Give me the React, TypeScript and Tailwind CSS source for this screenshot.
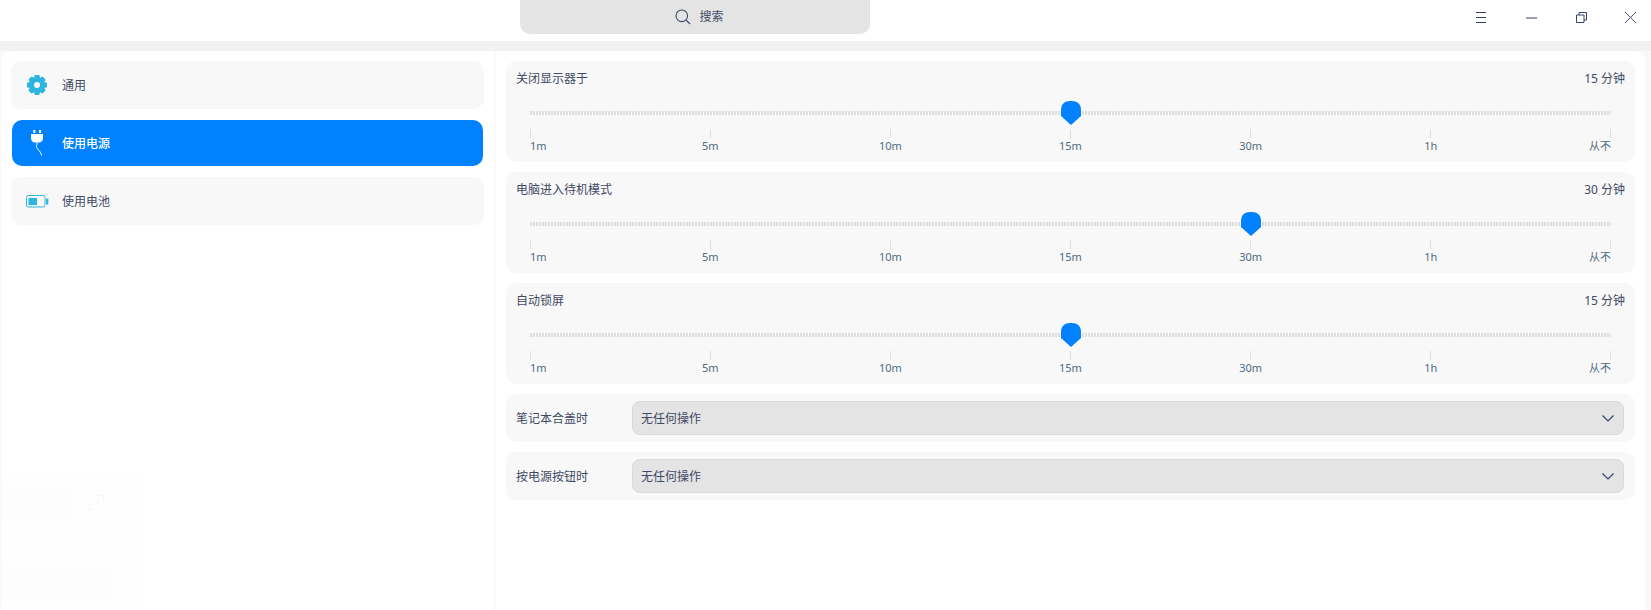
const font = "font-['Noto_Sans','Noto_Sans_CJK_SC',sans-serif]";
const marks = ["1m", "5m", "10m", "15m", "30m", "1h", "从不"];

type SliderRow = { title: string; value: string; step: number };

const sliders: SliderRow[] = [
  { title: "关闭显示器于", value: "15 分钟", step: 3 },
  { title: "电脑进入待机模式", value: "30 分钟", step: 4 },
  { title: "自动锁屏", value: "15 分钟", step: 3 },
];

function GearIcon() {
  return (
    <svg width="20" height="20" viewBox="0 0 20 20">
      {[0, 45, 90, 135, 180, 225, 270, 315].map((a) => (
        <rect key={a} x="7.2" y="0" width="5.6" height="5" rx="1.4" fill="#2cb5de" transform={`rotate(${a} 10 10)`} />
      ))}
      <circle cx="10" cy="10" r="7.6" fill="#2cb5de" />
      <circle cx="10" cy="10" r="3" fill="#f8f8f8" />
    </svg>
  );
}

function PlugIcon() {
  return (
    <svg width="12" height="26" viewBox="0 0 12 26" fill="#fff">
      <rect x="2.3" y="0" width="2" height="3" />
      <rect x="8" y="0" width="2" height="3" />
      <path d="M0 4h12v4.500C12 10.800 10.300 12.500 8 12.500H4C1.700 12.500 0 10.800 0 8.500z" />
      <path fill="none" stroke="#fff" strokeWidth="1" d="M6 12.500c0 2.500-.8 3.500-.3 5 .5 2 4.300 3.500 4.800 8" />
    </svg>
  );
}

function BatteryIcon() {
  return (
    <svg width="23" height="13" viewBox="0 0 23 13" className="shrink-0" fill="#2cb5de">
      <rect x=".5" y=".5" width="18.500" height="11.500" rx="2" fill="none" stroke="#2cb5de" />
      <rect x="2.500" y="3" width="8.500" height="7" />
      <rect x="20" y="3.500" width="2.300" height="6" />
    </svg>
  );
}

function Slider({ title, value, step }: SliderRow) {
  return (
    <div className="h-[101px] rounded-[10px] bg-[#f8f8f8] px-[10px] pt-[9px]">
      <div className="flex justify-between text-[12px] leading-[18px] text-[#3f4a64]">
        <span>{title}</span>
        <span>{value}</span>
      </div>
      <div className="relative mx-[14px] mt-[23px]">
        <div className="h-[4px] bg-[repeating-linear-gradient(90deg,#dedede_0_2px,transparent_2px_3px)]" />
        <svg
          width="20"
          height="24"
          viewBox="0 0 20 24"
          className="absolute top-[-10px]"
          style={{ left: `calc(${(step / 6) * 100}% - 10px)` }}
        >
          <path fill="#0081ff" d="M0 9C0 3 4 0 9 0h2c5 0 9 3 9 9v6l-10 9L0 15z" />
        </svg>
        <div className="mt-[14px] flex justify-between text-[11px] leading-[16px] text-[#526a7f]">
          {marks.map((m, i) => (
            <div
              key={m}
              className={`flex w-0 flex-col whitespace-nowrap ${
                i === 0 ? "items-start" : i === 6 ? "items-end" : "items-center"
              }`}
            >
              <div className="h-[9px] w-px shrink-0 bg-[#dcdcdc]" />
              <span>{m}</span>
            </div>
          ))}
        </div>
      </div>
    </div>
  );
}

function SelectRow({ label }: { label: string }) {
  return (
    <div className="flex h-[48px] items-center rounded-[10px] bg-[#f8f8f8] pl-[10px] pr-[11px] text-[12px] text-[#3f4a64]">
      <span className="w-[116px] pt-[1px]">{label}</span>
      <div className="flex h-[34px] flex-1 items-center justify-between rounded-[8px] border border-[#dadada] bg-[#e4e4e4] pl-[8px] pr-[9px]">
        <span className="pt-[1px]">无任何操作</span>
        <svg width="12" height="7" viewBox="0 0 12 7" fill="none" stroke="#34426a" strokeWidth="1.200">
          <path d="m.5.500 5.500 5.500 5.500-5.500" />
        </svg>
      </div>
    </div>
  );
}

function NavItem({
  label,
  icon,
  active,
}: {
  label: string;
  icon: React.ReactNode;
  active?: boolean;
}) {
  return (
    <div
      className={
        active
          ? "mx-px flex h-[46px] items-center rounded-[10px] bg-[#0081ff] pl-[14px] font-medium text-white"
          : "flex h-[48px] items-center rounded-[10px] bg-[#f8f8f8] pl-[15px] text-[#3f4a64]"
      }
    >
      <div className="flex w-[22px] justify-center">{icon}</div>
      <span className="ml-[14px] pt-[2px] text-[12px]">{label}</span>
    </div>
  );
}

export default function App() {
  return (
    <div className={`${font} flex h-[610px] w-[1651px] flex-col overflow-hidden bg-white`}>
      <header className="relative flex h-[41px] shrink-0 items-start bg-white pl-[520px]">
        <div className="flex h-[34px] w-[350px] items-center justify-center gap-[8px] rounded-b-[10px] bg-[#e4e4e4] pl-[9px] text-[12px] text-[#3f4a64]">
          <svg width="16" height="16" viewBox="0 0 16 16" fill="none" stroke="#414d68" strokeWidth="1.100">
            <circle cx="6.800" cy="6.800" r="5.800" />
            <path d="m11 11 4 4" />
          </svg>
          <span>搜索</span>
        </div>
        <div className="absolute right-[15px] top-0 flex h-[34px] items-center">
          <svg width="10" height="11" viewBox="0 0 10 11" stroke="#34426a" fill="none">
            <path d="M0 .5h10M0 5.500h10M0 10.500h10" />
          </svg>
          <svg width="11" height="11" viewBox="0 0 11 11" stroke="#34426a" fill="none" className="ml-[40px]">
            <path d="M0 6h11" />
          </svg>
          <svg width="11" height="11" viewBox="0 0 11 11" stroke="#34426a" fill="none" className="ml-[39px]">
            <path d="M.5 3h7.500v7.500H.5zM3 3V.5h7.500V8H8" />
          </svg>
          <svg width="11" height="11" viewBox="0 0 11 11" stroke="#34426a" fill="none" strokeWidth="0.900" className="ml-[38px]">
            <path d="m0 0 11 11M11 0 0 11" />
          </svg>
        </div>
      </header>
      <div className="flex min-h-0 flex-1 flex-col bg-[#f2f2f2] pt-[10px]">
        <main className="flex min-h-0 flex-1 gap-[2px] bg-[#f9f9f9] pl-px pr-[6px]">
          <aside className="relative flex w-[493px] flex-col gap-[11px] rounded-tl-[10px] bg-white px-[10px] pt-[10px]">
            <NavItem label="通用" icon={<GearIcon />} />
            <NavItem label="使用电源" icon={<PlugIcon />} active />
            <NavItem label="使用电池" icon={<BatteryIcon />} />
            {/* faint desktop watermark showing through the panel */}
            <div className="absolute bottom-0 left-0 h-[138px] w-[141px] rounded-tr-[16px] bg-[#fefefe]">
              <div className="absolute left-0 top-[13px] h-[34px] w-[69px] bg-[#fdfdfd]" />
              <div className="absolute bottom-[10px] left-0 h-[34px] w-[113px] bg-[#fdfdfd]" />
              <svg width="15" height="15" viewBox="0 0 15 15" fill="none" stroke="#f5f5f5" className="absolute left-[88px] top-[23px]">
                <path d="M9 .5h5.500V6M.5 9v5.500H6M10 5l-5 5" />
              </svg>
            </div>
          </aside>
          <section className="flex flex-1 flex-col gap-[10px] rounded-tr-[10px] bg-white px-[10px] pt-[10px]">
            {sliders.map((s) => (
              <Slider key={s.title} {...s} />
            ))}
            <SelectRow label="笔记本合盖时" />
            <SelectRow label="按电源按钮时" />
          </section>
        </main>
      </div>
    </div>
  );
}
